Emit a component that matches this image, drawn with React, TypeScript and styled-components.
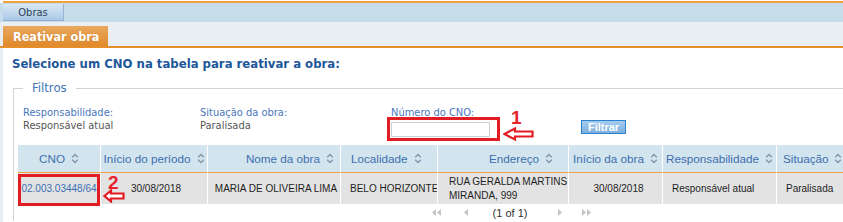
import React from "react";
import styled, { createGlobalStyle } from "styled-components";

const Global = createGlobalStyle`
  html, body { margin: 0; padding: 0; overflow: hidden; background: #fff; }
  #root { width: 843px; height: 222px; overflow: hidden; }
`;

const VERD = `"DejaVu Sans Condensed", "DejaVu Sans", sans-serif`;
const ARIAL = `"Liberation Sans", Arial, sans-serif`;

const Page = styled.div`
  width: 870px;
  background: #fff;
  padding-top: 1px;
`;

const TopRule = styled.div`
  height: 2px;
  margin-left: 3px;
  background: #f1a13f;
`;

const NavBar = styled.div`
  height: 19px;
  background: #c6dcea;
  padding: 1px 0 0 3px;
  box-sizing: border-box;
  display: flex;
`;

const NavTab = styled.div`
  width: 61px;
  height: 17px;
  box-sizing: border-box;
  background: linear-gradient(#d9e8f6, #aac8e6);
  border-right: 1px solid #95b4d2;
  border-bottom: 1px solid #8fb0cf;
  font: 11px ${VERD};
  font-stretch: condensed;
  color: #2d3f55;
  display: flex;
  align-items: center;
  justify-content: center;
`;

const TitleBar = styled.div`
  height: 24px;
  background: #e8eef2;
  padding-left: 3px;
  display: flex;
  align-items: flex-end;
`;

const TitleTab = styled.div`
  width: 105px;
  height: 20px;
  background: linear-gradient(#eaa95f, #e0892b);
  color: #fff;
  font: bold 12.5px ${VERD};
  font-stretch: condensed;
  display: flex;
  align-items: center;
  padding-left: 10px;
  box-sizing: border-box;
  text-shadow: 0 0 1px rgba(120, 60, 0, 0.3);
`;

const TitleRule = styled.div`
  height: 2px;
  background: #e68e2b;
`;

const Body = styled.div`
  background: #e8eef2;
  padding-left: 3px;
`;

const Content = styled.div`
  background: #fff;
  padding: 8px 0 0 9px;
  height: 180px;
`;

const Heading = styled.div`
  font: bold 13px/16px ${VERD};
  font-stretch: condensed;
  color: #1d5799;
`;

const Filters = styled.fieldset`
  margin: 8px 0 0 1px;
  padding: 0 0 0 4px;
  border: none;
  border-top: 1px solid #d2d2d2;
  border-left: 1px solid #d2d2d2;
  min-width: 0;
`;

const Legend = styled.legend`
  margin-left: 5px;
  padding: 0 9px;
  font: 13px/16px ${VERD};
  font-stretch: condensed;
  color: #3f76b8;
`;

const FilterRow = styled.div`
  margin-top: 10px;
  height: 29px;
  padding-left: 5px;
  display: flex;
  align-items: flex-start;
`;

const FilterGroup = styled.div<{ $w: number }>`
  width: ${(p) => p.$w}px;
  flex: none;
  display: flex;
  flex-direction: column;
`;

const Label = styled.div`
  font: 11px/13px ${VERD};
  font-stretch: condensed;
  color: #4a76bd;
`;

const Value = styled.div`
  font: 11px/13px ${VERD};
  font-stretch: condensed;
  color: #555;
`;

const InputWrap = styled.div`
  position: relative;
  margin-top: 1px;
  width: 99px;
  height: 15px;
`;

const TextInput = styled.input`
  width: 99px;
  height: 15px;
  box-sizing: border-box;
  border: 1px solid #cfcfcf;
  padding: 0 2px;
  margin: 0;
  background: #fff;
  outline: none;
`;

const RedBox = styled.div<{ $l: number; $t: number; $w: number; $h: number }>`
  position: absolute;
  z-index: 2;
  left: ${(p) => p.$l}px;
  top: ${(p) => p.$t}px;
  width: ${(p) => p.$w}px;
  height: ${(p) => p.$h}px;
  box-sizing: border-box;
  border: 3px solid #e31b23;
  pointer-events: none;
`;

const Marker = styled.div<{ $l: number; $t: number }>`
  position: absolute;
  z-index: 2;
  left: ${(p) => p.$l}px;
  top: ${(p) => p.$t}px;
  font: bold 19px/19px ${ARIAL};
  color: #e8242c;
`;

const ArrowSlot = styled.div<{ $l: number; $t: number }>`
  position: absolute;
  z-index: 2;
  left: ${(p) => p.$l}px;
  top: ${(p) => p.$t}px;
  line-height: 0;
`;

const FilterButton = styled.button`
  margin-top: 14px;
  width: 45px;
  height: 14px;
  padding: 0;
  box-sizing: border-box;
  border: 1px solid #2a83cc;
  background: linear-gradient(#a6ccee, #7db0e0);
  color: #fff;
  font: bold 11px/12px ${ARIAL};
`;

const Table = styled.table`
  margin-top: 10px;
  border-collapse: separate;
  border-spacing: 0;
  table-layout: fixed;
  width: 834px;
`;

type Align = "left" | "center" | "right";

const Th = styled.th<{ $w: number }>`
  width: ${(p) => p.$w}px;
  height: 28px;
  box-sizing: border-box;
  padding: 0;
  background: #d2e4ee;
  border-right: 1px solid #fff;
  border-bottom: 1px solid #f0a040;
  font: 11.7px ${ARIAL};
  font-weight: normal;
  color: #3d6fad;
`;

const HeadInner = styled.div<{ $align: Align; $pl: number; $pr: number }>`
  display: flex;
  align-items: center;
  gap: 6px;
  white-space: nowrap;
  justify-content: ${(p) =>
    p.$align === "left" ? "flex-start" : p.$align === "right" ? "flex-end" : "center"};
  padding: 0 ${(p) => p.$pr}px 0 ${(p) => p.$pl}px;
`;

const Td = styled.td<{ $align: Align; $pl: number }>`
  position: relative;
  height: 31px;
  box-sizing: border-box;
  padding: 0 0 0 ${(p) => p.$pl}px;
  background: #e3e3e3;
  border-right: 1px solid #fff;
  font: 10px/14px ${ARIAL};
  color: #1e1e1e;
  text-align: ${(p) => p.$align};
  white-space: nowrap;
  overflow: visible;
`;

const Clip = styled.div`
  overflow: hidden;
  white-space: nowrap;
`;

const CnoLink = styled.a`
  color: #3a6fb4;
  text-decoration: none;
`;

const Pager = styled.div`
  height: 17px;
  display: grid;
  grid-template-columns: 30px 28px 60px 40px 14px;
  align-items: center;
  justify-items: center;
  padding-left: 404px;
  font: 11px ${ARIAL};
  color: #333;
`;

const SortIcon = () => (
  <svg width="8" height="11" viewBox="0 0 8 11">
    <path d="M1.2 4.3 L4 1.5 L6.8 4.3 M1.2 6.7 L4 9.5 L6.8 6.7" fill="none" stroke="#7f97ab" strokeWidth="1.3" />
  </svg>
);

const LeftArrow = ({ w, h }: { w: number; h: number }) => {
  const mid = h / 2;
  const headX = Math.round(w * 0.38);
  return (
    <svg width={w} height={h} viewBox={`0 0 ${w} ${h}`}>
      <polygon
        points={`1.5,${mid} ${headX},1.5 ${headX},${mid - 2.5} ${w - 1.5},${mid - 2.5} ${w - 1.5},${mid + 2.5} ${headX},${mid + 2.5} ${headX},${h - 1.5}`}
        fill="#fff"
        stroke="#e31b23"
        strokeWidth="2.2"
        strokeLinejoin="miter"
      />
    </svg>
  );
};

const Tri = ({ dir, double }: { dir: "l" | "r"; double?: boolean }) => {
  const one = (x: number) =>
    dir === "l" ? `M${x + 4} 1 L${x} 4.5 L${x + 4} 8 Z` : `M${x} 1 L${x + 4} 4.5 L${x} 8 Z`;
  return (
    <svg width={double ? 10 : 5} height="9" viewBox={`0 0 ${double ? 10 : 5} 9`}>
      <path d={double ? one(0) + " " + one(5) : one(0)} fill="#c4c4c4" />
    </svg>
  );
};

const columns: { title: string; w: number; align: Align; pl: number; pr: number }[] = [
  { title: "CNO", w: 83, align: "center", pl: 0, pr: 0 },
  { title: "Início do período", w: 107, align: "center", pl: 0, pr: 0 },
  { title: "Nome da obra", w: 133, align: "right", pl: 0, pr: 6 },
  { title: "Localidade", w: 97, align: "left", pl: 10, pr: 0 },
  { title: "Endereço", w: 131, align: "right", pl: 0, pr: 15 },
  { title: "Início da obra", w: 94, align: "center", pl: 0, pr: 0 },
  { title: "Responsabilidade", w: 114, align: "center", pl: 0, pr: 0 },
  { title: "Situação", w: 75, align: "left", pl: 6, pr: 0 },
];

export default function App() {
  return (
    <>
      <Global />
      <Page>
        <TopRule />
        <NavBar>
          <NavTab>Obras</NavTab>
        </NavBar>
        <TitleBar>
          <TitleTab>Reativar obra</TitleTab>
        </TitleBar>
        <TitleRule />
        <Body>
          <Content>
            <Heading>Selecione um CNO na tabela para reativar a obra:</Heading>
            <Filters>
              <Legend>Filtros</Legend>
              <FilterRow>
                <FilterGroup $w={177}>
                  <Label>Responsabilidade:</Label>
                  <Value>Responsável atual</Value>
                </FilterGroup>
                <FilterGroup $w={191}>
                  <Label>Situação da obra:</Label>
                  <Value>Paralisada</Value>
                </FilterGroup>
                <FilterGroup $w={190}>
                  <Label>Número do CNO:</Label>
                  <InputWrap>
                    <TextInput type="text" />
                    <RedBox $l={-4} $t={-3} $w={113} $h={24} />
                    <Marker $l={120} $t={-12}>1</Marker>
                    <ArrowSlot $l={112} $t={7}>
                      <LeftArrow w={31} h={14} />
                    </ArrowSlot>
                  </InputWrap>
                </FilterGroup>
                <FilterButton>Filtrar</FilterButton>
              </FilterRow>
              <Table>
                <thead>
                  <tr>
                    {columns.map((c) => (
                      <Th key={c.title} $w={c.w}>
                        <HeadInner $align={c.align} $pl={c.pl} $pr={c.pr}>
                          <span>{c.title}</span>
                          <SortIcon />
                        </HeadInner>
                      </Th>
                    ))}
                  </tr>
                </thead>
                <tbody>
                  <tr>
                    <Td $align="center" $pl={0}>
                      <CnoLink href="#">02.003.03448/64</CnoLink>
                      <RedBox $l={0} $t={1} $w={82} $h={32} />
                      <Marker $l={90} $t={0}>2</Marker>
                      <ArrowSlot $l={85} $t={16}>
                        <LeftArrow w={22} h={14} />
                      </ArrowSlot>
                    </Td>
                    <Td $align="center" $pl={4}>30/08/2018</Td>
                    <Td $align="center" $pl={4}>MARIA DE OLIVEIRA LIMA</Td>
                    <Td $align="left" $pl={9}>
                      <Clip>BELO HORIZONTE</Clip>
                    </Td>
                    <Td $align="left" $pl={11}>
                      RUA GERALDA MARTINS
                      <br />
                      MIRANDA, 999
                    </Td>
                    <Td $align="center" $pl={6}>30/08/2018</Td>
                    <Td $align="left" $pl={9}>Responsável atual</Td>
                    <Td $align="left" $pl={9}>Paralisada</Td>
                  </tr>
                </tbody>
              </Table>
              <Pager>
                <Tri dir="l" double />
                <Tri dir="l" />
                <span>(1 of 1)</span>
                <Tri dir="r" />
                <Tri dir="r" double />
              </Pager>
            </Filters>
          </Content>
        </Body>
      </Page>
    </>
  );
}
